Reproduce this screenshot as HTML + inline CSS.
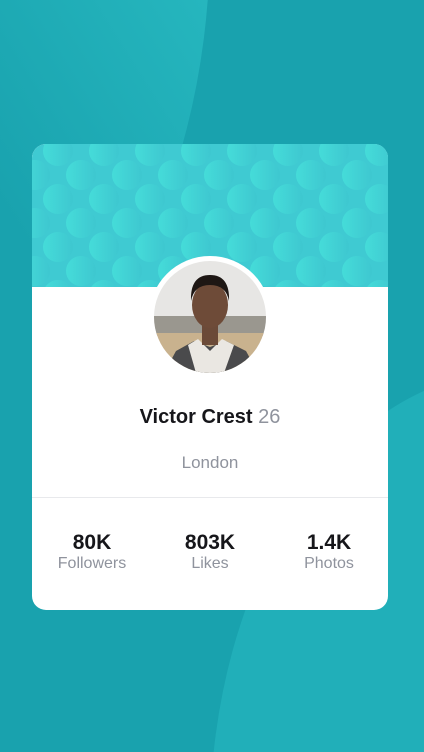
<!DOCTYPE html>
<html><head><style>
*{margin:0;padding:0;box-sizing:border-box}
html,body{width:424px;height:752px;overflow:hidden}
body{background:#19a2ae;position:relative;font-family:"Liberation Sans",sans-serif}
.bg{position:absolute;left:0;top:0}
.card{position:absolute;left:32px;top:144px;width:356px;height:466px;background:#fff;border-radius:14px;overflow:hidden}
.hdr{height:143px;background:#3fcad2;position:relative;overflow:hidden}
.c{position:absolute;width:30px;height:30px;border-radius:50%;background:linear-gradient(90deg,#45dcd9,#3ec7d0)}
.av{position:absolute;left:117px;top:112px;width:122px;height:122px;border-radius:50%;background:#fff;padding:5px}
.av svg{display:block;border-radius:50%}
.name{position:absolute;top:262px;width:100%;text-align:center;font-size:20px;font-weight:bold;color:#16161a}
.name span{font-weight:normal;color:#8f939d}
.city{position:absolute;top:309px;width:100%;text-align:center;font-size:17px;color:#8f939d}
.hr{position:absolute;top:353px;left:0;width:100%;height:1px;background:#e8e9ec}
.st{position:absolute;top:387px;width:120px;text-align:center}
.st b{display:block;font-size:21px;color:#16161a;line-height:24px}
.st i{display:block;font-style:normal;font-size:16px;color:#8f939d;line-height:18px}
</style></head><body>
<svg class="bg" width="424" height="752" viewBox="0 0 424 752">
<defs><linearGradient id="g" x1="0" y1="1" x2="1" y2="0"><stop offset="0.45" stop-color="#19a2ae"/><stop offset="0.85" stop-color="#2cc0c6"/></linearGradient></defs>
<ellipse cx="-105" cy="-60" rx="315" ry="500" fill="url(#g)"/>
<ellipse cx="510" cy="822" rx="300" ry="450" fill="#21afb9"/>
</svg>
<div class="card">
<div class="hdr" id="h"></div>
<div class="av"><svg width="112" height="112" viewBox="0 0 112 112">
<rect width="112" height="112" fill="#e7e6e4"/>
<rect y="55" width="112" height="20" fill="#9a978f"/>
<rect y="72" width="112" height="40" fill="#c9b28e"/>
<path d="M10 112 L22 90 L40 80 L56 86 L72 80 L92 90 L104 112Z" fill="#4a4a4c"/>
<path d="M34 84 L44 78 L56 90 L68 78 L80 84 L70 112 H42Z" fill="#eae7e2"/>
<rect x="48" y="62" width="16" height="22" fill="#6b4a38"/>
<ellipse cx="56" cy="44" rx="18" ry="23" fill="#6e4b38"/>
<path d="M37 40 Q36 14 56 14 Q76 14 75 40 Q72 24 56 24 Q40 24 37 40Z" fill="#1e1714"/>
</svg></div>
<div class="name">Victor Crest <span>26</span></div>
<div class="city">London</div>
<div class="hr"></div>
<div class="st" style="left:0"><b>80K</b><i>Followers</i></div>
<div class="st" style="left:118px"><b>803K</b><i>Likes</i></div>
<div class="st" style="left:237px"><b>1.4K</b><i>Photos</i></div>
</div>
<script>
var h=document.getElementById('h'),s='';
for(var r=0;r<7;r++){for(var k=-1;k<9;k++){var x=k*46+(r%2?23:0)+11,y=r*24-8;s+='<div class="c" style="left:'+x+'px;top:'+y+'px"></div>';}}
h.innerHTML=s;
</script>
</body></html>
